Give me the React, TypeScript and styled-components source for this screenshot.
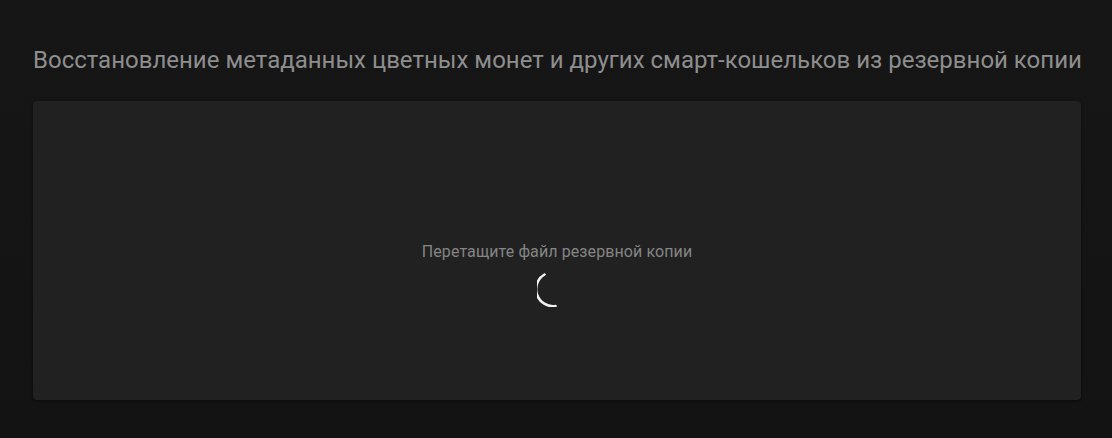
import styled, { createGlobalStyle, keyframes } from 'styled-components'

const GlobalStyle = createGlobalStyle`
   html, body {
      margin: 0;
      padding: 0;
      background: #131313;
      font-family: Roboto, 'Noto Sans', sans-serif;
   }
`

const Page = styled.div`
   min-height: 438px;
   box-sizing: border-box;
   padding: 44px 31px 0 33px;
   background: linear-gradient(180deg, #161616 0%, #131313 100%);
`

const Title = styled.h1`
   margin: 0 0 25px;
   font-size: 24px;
   line-height: 32px;
   font-weight: 400;
   color: #8e8e8e;
   white-space: nowrap;
`

const DropZone = styled.div`
   height: 299px;
   box-sizing: border-box;
   padding-top: 141px;
   display: flex;
   flex-direction: column;
   align-items: center;
   gap: 9px;
   background: #212121;
   border-radius: 4px;
   box-shadow: 0 1px 3px rgba(0, 0, 0, 0.5);
`

const Hint = styled.div`
   font-size: 16px;
   line-height: 20px;
   letter-spacing: 0.1px;
   color: #858585;
`

const spin = keyframes`
   from { transform: rotate(0deg); }
   to { transform: rotate(360deg); }
`

const Spinner = styled.svg`
   width: 36px;
   height: 36px;
   margin-left: -4px;
   animation: ${spin} 1.2s linear infinite paused;
`

export default function App() {
   return (
      <>
         <GlobalStyle />
         <Page>
            <Title>
               Восстановление метаданных цветных монет и других смарт-кошельков из резервной копии
            </Title>
            <DropZone>
               <Hint>Перетащите файл резервной копии</Hint>
               <Spinner viewBox='0 0 36 36'>
                  <path
                     d='M7.5 3.5 A17 17 0 0 0 18.5 35'
                     fill='none'
                     stroke='#f2f2f2'
                     strokeWidth='2.6'
                     strokeLinecap='round'
                  />
               </Spinner>
            </DropZone>
         </Page>
      </>
   )
}
